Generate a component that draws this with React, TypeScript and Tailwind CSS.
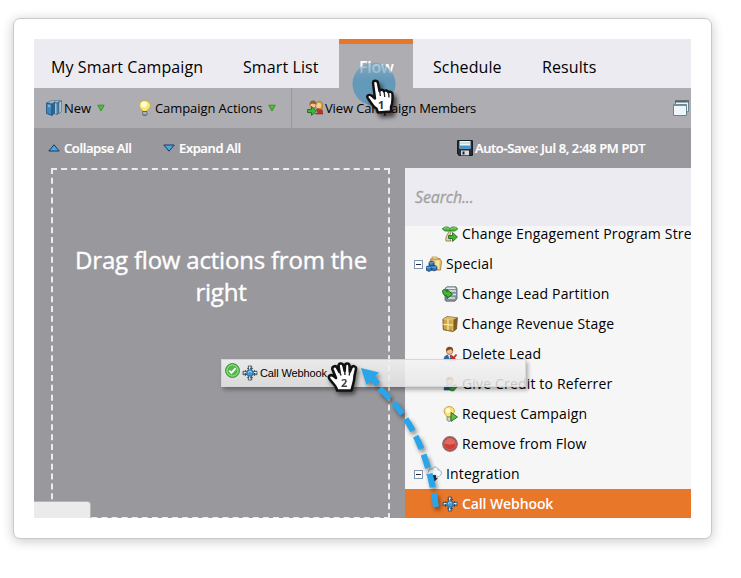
import type { ReactNode } from 'react'

type IconName =
  | 'books' | 'bulb' | 'members' | 'windows' | 'floppy' | 'sprout' | 'folder' | 'partition'
  | 'box' | 'deleteLead' | 'credit' | 'request' | 'remove' | 'cloud' | 'webhook'

interface Tab {
  label: string
  className: string
}

const TABS: Tab[] = [
  { label: 'My Smart Campaign', className: 'w-[189px] pl-[17px] pt-4' },
  { label: 'Smart List', className: 'w-[116px] pl-5 pt-4' },
  { label: 'Flow', className: 'w-[74px] border-t-[5px] border-[#e8772a] bg-[#aeadb2] pl-5 pt-[11px] font-semibold tracking-[-0.3px] text-white' },
  { label: 'Schedule', className: 'w-[109px] pl-5 pt-4' },
  { label: 'Results', className: 'pl-5 pt-4' },
]

interface TreeItem {
  label: string
  icon: IconName
  group?: boolean
  selected?: boolean
}

const TREE: TreeItem[] = [
  { label: 'Change Engagement Program Stream', icon: 'sprout' },
  { label: 'Special', icon: 'folder', group: true },
  { label: 'Change Lead Partition', icon: 'partition' },
  { label: 'Change Revenue Stage', icon: 'box' },
  { label: 'Delete Lead', icon: 'deleteLead' },
  { label: 'Give Credit to Referrer', icon: 'credit' },
  { label: 'Request Campaign', icon: 'request' },
  { label: 'Remove from Flow', icon: 'remove' },
  { label: 'Integration', icon: 'cloud', group: true },
  { label: 'Call Webhook', icon: 'webhook', selected: true },
]

export default function App() {
  return (
    <div className="relative h-[578px] w-[741px] overflow-hidden bg-white pl-[13px] pt-[18px] font-['Open_Sans',sans-serif] text-black">
      <div className="h-[521px] w-[699px] rounded-[7px] border border-[#c9c9c9] bg-white p-5 shadow-[0_2px_12px_rgba(0,0,0,0.22)]">
        <div className="flex h-[479px] w-[657px] flex-col overflow-hidden bg-[#99989d]">
          <nav className="flex h-[49px] shrink-0 bg-[#ecebf2] text-[16px] leading-6 tracking-[0.1px] whitespace-nowrap">
            {TABS.map(tab => <div key={tab.label} className={tab.className}>{tab.label}</div>)}
          </nav>
          <Toolbar />
          <div className="flex h-10 shrink-0 items-center text-[13px] font-semibold tracking-[-0.38px] whitespace-nowrap text-white [-webkit-text-stroke:0.2px_white]">
            <Triangle up className="ml-[14px] mr-1" />
            <span className="w-[99px] pt-0.5">Collapse All</span>
            <Triangle className="mr-1" />
            <span className="w-[278px] pt-0.5">Expand All</span>
            <Icon name="floppy" />
            <span className="ml-0.5 pt-0.5">Auto-Save: Jul 8, 2:48 PM PDT</span>
          </div>
          <div className="flex h-[350px] shrink-0 gap-[15px]">
            <div className="ml-[17px] h-[351px] w-[339px] shrink-0 border-2 border-dashed border-[#ecebf2] pt-[74px] pl-px text-center text-[24px] leading-8 tracking-[-0.2px] text-white [-webkit-text-stroke:0.4px_white]">
              Drag flow actions from the<br />right
            </div>
            <div className="flex w-[286px] shrink-0 flex-col">
              <div className="flex h-[58px] shrink-0 items-center bg-[#ecebf2] pl-[10px] text-[16px] tracking-[-0.15px] text-[#a1a19c] italic [-webkit-text-stroke:0.3px_#a1a19c]">
                Search...
              </div>
              <div className="h-[292px] overflow-hidden bg-[#f6f6f6]">
                <div className="-mt-[7px] text-[14px] tracking-[0.17px]">
                  {TREE.map(item => <TreeRow key={item.label} item={item} />)}
                </div>
              </div>
            </div>
          </div>
        </div>
      </div>

      {/* status tip clipped by the window's lower left corner */}
      <div className="absolute left-[34px] top-[501px] h-[17px] w-[57px] rounded-tr-[4px] border-t border-r border-[#b5b5b7] bg-[#ebebeb]" />
      <DragProxy />
      <DragArrow />
      <PointerHand />
      <GrabHand />
    </div>
  )
}

function Toolbar() {
  return (
    <div className="flex h-10 shrink-0 items-center bg-[#aeadb2] text-[13px] whitespace-nowrap">
      <div className="flex h-full w-[257px] items-center pl-3">
        <Icon name="books" />
        <span className="ml-0.5 w-[33px] pt-px">New</span>
        <GreenCaret />
        <span className="ml-8"><Icon name="bulb" /></span>
        <span className="ml-0.5 w-[113px] pt-px tracking-[-0.08px]">Campaign Actions</span>
        <GreenCaret />
      </div>
      <div className="flex h-full flex-1 items-center border-l border-[#98979b] pl-[15px]">
        <Icon name="members" />
        <span className="ml-0.5 pt-px tracking-[-0.13px]">View Campaign Members</span>
        <span className="mr-[2px] ml-auto"><Icon name="windows" /></span>
      </div>
    </div>
  )
}

function TreeRow({ item }: { item: TreeItem }) {
  return (
    <div className={`flex h-[30px] items-center whitespace-nowrap ${item.group ? 'pl-[9px]' : 'pl-[37px]'} ${item.selected ? 'bg-[#e8772a] font-semibold tracking-[-0.1px] text-white' : ''}`}>
      {item.group && (
        <span className="mr-[3px] flex h-[9px] w-[9px] items-center justify-center border border-[#8095ad] bg-white">
          <span className="h-px w-[5px] bg-[#1c2b3b]" />
        </span>
      )}
      <Icon name={item.icon} />
      <span className="ml-1 pb-0.5">{item.label}</span>
    </div>
  )
}

function GreenCaret() {
  return (
    <svg width="8" height="8" viewBox="0 0 8 8">
      <path d="M.8 1.2h6.4L4 7z" fill="#4fbf34" stroke="#3a8a2e" strokeWidth=".9" strokeLinejoin="round" />
    </svg>
  )
}

function Triangle({ up, className }: { up?: boolean; className: string }) {
  return (
    <svg className={className} width="12" height="8" viewBox="0 0 12 8">
      <path d={up ? 'M6 .8 11.2 7H.8z' : 'M6 7.2 11.2 1H.8z'} fill="#4ba7df" stroke="#143c63" strokeLinejoin="round" />
    </svg>
  )
}

function Person({ shirt = '#2f6ca5' }: { shirt?: string }) {
  return (
    <>
      <path d="M1 14c0-4 2-5 5-5s5 1 5 5z" fill={shirt} stroke="#234566" strokeWidth=".6" />
      <path d="M5 9h3l-1.4 4z" fill="#f2f2f2" />
      <circle cx="6.6" cy="5" r="3.3" fill="#f0bf8c" stroke="#8b5a2c" strokeWidth=".6" />
      <path d="M3.2 5C2.7 1.5 5 .6 7 .7c2.5.1 3.6 2 3 4.3-1-.3-1.4-1.5-2.4-1.8-1.3.8-3 .4-3.3 1.8z" fill="#7b4a22" />
    </>
  )
}

function RightArrow() {
  return <path d="M2 6.5h4V3.5L11 8l-5 4.500V9.500H2z" fill="#43b531" stroke="#17651a" strokeWidth=".8" />
}

const ICONS: Record<IconName, ReactNode> = {
  books: (
    <>
      <path d="M.5 3.200 5 .8h10.500l-2 2z" fill="#c5dcea" stroke="#2f5c80" strokeWidth=".7" />
      <path d="M.5 3.200 6 4.200v11.200L.5 13.500z" fill="#3f86b8" stroke="#1e4e78" strokeWidth=".8" />
      <path d="m6 4.200 3-2.500v11.200l-3 2.500z" fill="#2c6a9c" stroke="#1e4e78" strokeWidth=".6" />
      <path d="m9 2.800 2 .5v11.200l-2-.5z" fill="#dce9f1" stroke="#2f5c80" strokeWidth=".6" />
      <path d="m11 3.300 2-2v11.200l-2 2z" fill="#5592bc" stroke="#1e4e78" strokeWidth=".6" />
      <path d="m13 2.500 2.500-1.700-.3 11-2.200 2z" fill="#b9d2e1" stroke="#2f5c80" strokeWidth=".6" />
      <path d="m2 5 2.500.5M2 6.500 4.500 7" stroke="#9dcbe8" strokeWidth=".8" />
    </>
  ),
  bulb: (
    <>
      <path d="M6 11.5C5.5 9.5 2.200 8.500 2.200 5.500a5.600 5.100 0 0 1 11.200 0c0 3-3.300 4-3.800 6z" fill="#fbe66e" stroke="#c3a144" strokeWidth=".8" />
      <ellipse cx="7" cy="4.500" rx="3" ry="3" fill="#fffbd2" />
      <path d="M5.700 11.500h4.200v3l-1 1.200H6.700l-1-1.200z" fill="#8d9498" stroke="#454b50" strokeWidth=".7" />
      <path d="M5.700 13h4.200" stroke="#e5e5e5" strokeWidth=".7" />
    </>
  ),
  members: (
    <>
      <path d="M8.500 14c0-4 1-5.500 3.500-5.500s3.700 1.500 3.700 5.500z" fill="#c92f25" stroke="#7e2019" strokeWidth=".6" />
      <path d="M9 7.500C7.800-.5 16 .2 15.400 5l-.2 4.200H13z" fill="#e0aa2c" stroke="#94681c" strokeWidth=".6" />
      <circle cx="11.500" cy="5.500" r="2.500" fill="#f6cf9e" />
      <path d="M2 13c0-3.500 1.500-4.500 4-4.500S10 9.500 10 13z" fill="#d9e2ea" stroke="#6b7d8e" strokeWidth=".6" />
      <circle cx="6" cy="5" r="3.100" fill="#f3c491" stroke="#8b5a2c" strokeWidth=".6" />
      <path d="M2.800 5C2.300 1.300 4.500.5 6.300.5c2.300 0 3.300 2 2.900 4-1.700 0-4-1.800-6.400.5z" fill="#8e6234" />
      <g transform="translate(-1.500 3)"><RightArrow /></g>
    </>
  ),
  windows: (
    <>
      <path d="M2.500.7h13v11h-13z" fill="#edf3f6" stroke="#6a8493" />
      <path d="M2 .3h14v2.200H2z" fill="#59656d" />
      <path d="M.5 4.500h13v11H.5z" fill="#eef6fa" stroke="#668494" />
      <path d="M.5 4.500h13v1.500H.5z" fill="#78909c" />
      <path d="M11.500 4.700h1.300v1h-1.300zM13.800 1h1.300v1h-1.300z" fill="#dc5836" />
    </>
  ),
  floppy: (
    <>
      <path d="M.6.6h14.800v14.800H2L.6 14z" fill="#292e36" stroke="#11151b" />
      <path d="M2.500 1h11v7.500h-11z" fill="#e9f7ff" />
      <path d="M2.500 5.500h11v3h-11z" fill="#3e99d8" />
      <path d="M3 3h10" stroke="#abc3cf" />
      <path d="M4 10.500h8v4.800H4z" fill="#d6dade" />
      <path d="M5.500 11.500h2v3h-2z" fill="#20242a" />
    </>
  ),
  sprout: (
    <>
      <path d="M7.500 4c-1 4-4.500 6-3.500 11h5c-2-3-1-7 0-9z" fill="#e7d6ad" stroke="#8a6c3d" strokeWidth=".8" />
      <path d="M8 4.500C6 5.500 1 5.500.5 2.500 3 .3 7 .5 8 2.500c1-2 5.500-2.200 7.500 0C15 5.500 10 5.500 8 4.500z" fill="#4eb937" stroke="#1e7124" strokeWidth=".8" />
      <path d="M2 2.300c2-.8 4-.5 5 .7M14 2.300c-2-.8-4-.5-5 .7" stroke="#a6e48a" strokeWidth=".7" fill="none" />
      <g transform="translate(4.500 3)"><RightArrow /></g>
    </>
  ),
  folder: (
    <>
      <path d="M6 3V1h5l1 1.500h2v3z" fill="#fff0bc" stroke="#a98037" strokeWidth=".7" />
      <path d="M4.500 3h9l2 2-1 9h-9z" fill="#edc569" stroke="#9e722b" strokeWidth=".8" />
      <path d="m9.500 5 4-1-.5 9H9.500z" fill="#f9e3a2" />
      <path d="m3 6 3-1 2 1v3l-3 1-2-1zM0 11l3-1.500L6 11v3l-3 1.500L0 14zM5 10.500 8 9l3 1.500v3L8 15l-3-1.500z" fill="#2f78bc" stroke="#173f70" strokeWidth=".7" />
      <path d="m3.300 6.400 2.300.6L7.700 6M.5 11.200l2.600.8 2.400-.8M5.500 10.700l2.500.8 2.500-.8" stroke="#8bc4ea" strokeWidth=".7" fill="none" />
    </>
  ),
  partition: (
    <>
      <path d="M3 2.500 5 .8h9l1 2v10l-2 2.400H4l-1-1z" fill="#84939a" stroke="#596870" strokeWidth=".8" />
      <path d="M5 1.500h8l1 1.500H4z" fill="#e9efef" />
      <path d="M6 5h8M6 8.500h8M6 12h7" stroke="#dde4e5" strokeWidth="1.300" />
      <path d="M.6 4.500c1-1.500 2.500-1 3.500 0L5 5.700V3.500l5.500 4.700L5 12.500V10C2 10 .6 8 .6 4.500z" fill="#45b72d" stroke="#145d19" strokeWidth=".9" />
    </>
  ),
  box: (
    <>
      <path d="M1 3 5 .7l10.300 1L14.500 13l-3.500 2.500-9.700-1.800z" fill="#cda545" stroke="#6e4b19" strokeWidth=".9" />
      <path d="m1 3 10 1 4.300-2.300L5 .7z" fill="#d9b866" />
      <path d="m11 4 4.300-2.300L14.500 13 11 15.500z" fill="#805c25" />
      <path d="M6 3.500v10.800M1.300 8.300l9.700.9" fill="none" stroke="#fbe9ab" strokeWidth="1.300" />
      <path d="m1 3 10 1v11.400" fill="none" stroke="#f0d488" strokeWidth=".6" />
    </>
  ),
  deleteLead: (
    <>
      <g transform="translate(1 0)"><Person /></g>
      <path d="m8 9.500 6.500 5M14.500 8.500 9 15" stroke="#d02c24" strokeWidth="1.900" />
    </>
  ),
  credit: (
    <>
      <g transform="translate(1 0)"><Person shirt="#1b5c8c" /></g>
      <path d="m6 10 3 1 4-2.500 2.500 2-4 4.500-3-.5z" fill="#34a233" stroke="#14591d" strokeWidth=".7" />
    </>
  ),
  request: (
    <>
      <path d="M5 11C4.500 9 2 8 2 5.200a5.200 4.700 0 0 1 10.400 0C12.400 8 9.500 9 9 11z" fill="#fbe475" stroke="#b99434" strokeWidth=".8" />
      <ellipse cx="6" cy="4.500" rx="2.300" ry="2.500" fill="#fffbd2" />
      <path d="M5 11h4v3l-1 1.200H6L5 14z" fill="#d2d3d1" stroke="#686e72" strokeWidth=".7" />
      <path d="m9 6.500 6.500 4.500L9 15.400z" fill="#5cc13d" stroke="#246b1e" strokeWidth=".9" />
    </>
  ),
  remove: (
    <>
      <circle cx="8" cy="8" r="7.300" fill="#c2322f" stroke="#837878" strokeWidth="1.200" />
      <circle cx="8" cy="8" r="5.800" fill="#cf3d39" stroke="#dc7771" strokeWidth=".6" />
      <path d="M2.700 7.500a5.300 5 0 0 1 10.600 0c-4 1.500-7 1.500-10.600 0z" fill="#df6a62" />
    </>
  ),
  cloud: (
    <>
      <path d="M4 11C.5 11-.3 7 2.700 6 2.500 3 5.200 2.300 6.300 3.300 7-.2 12.300.6 12 4c3.500-.5 4.500 4 2 5.500C13 11 12 11 10 11z" fill="#f5f9fb" stroke="#9aadba" />
      <path d="M7 9h3v3h2l-3.500 3.500L5 12h2z" fill="#263646" />
    </>
  ),
  webhook: (
    <>
      <path d="M6.300 1h3.400v14H6.300zM1 6.300h14v3.400H1z" fill="#8fa9b8" stroke="#33495a" strokeWidth=".8" />
      <path d="M5.300 3.500h5.400M5.300 12.500h5.400M3.500 5.300v5.400M12.500 5.300v5.400" stroke="#33495a" strokeWidth="1" />
      <path d="M7.600 1.500v3M2 7.500h2.500M12 7.500h2.500M7.600 11.500V14.500" stroke="#e3edf2" strokeWidth="1.100" />
      <circle cx="8" cy="8" r="3.200" fill="#3c9ad8" stroke="#28618c" strokeWidth=".8" />
      <path d="m6 7.700 1.800-1.700 1.900 1.200" stroke="#b7e2f8" fill="none" />
    </>
  ),
}

function Icon({ name }: { name: IconName }) {
  return <svg className="block shrink-0" width="16" height="16" viewBox="0 0 16 16">{ICONS[name]}</svg>
}

function DragProxy() {
  return (
    <div className="absolute left-[221px] top-[359px] flex h-[28px] w-[305px] items-center border border-[#d2d2d2]/80 bg-linear-to-b from-[#f3f3f3]/90 to-[#e6e6e6]/85 pl-[3px] font-['Liberation_Sans',sans-serif] text-[11px] tracking-[-0.12px] shadow-[2px_3px_4px_rgba(0,0,0,0.3)]">
      <svg className="-mt-[6px]" width="15" height="15" viewBox="0 0 15 15">
        <circle cx="7.5" cy="7.5" r="6.9" fill="#52b947" stroke="#2f8f31" />
        <circle cx="7.5" cy="7.5" r="5.6" fill="none" stroke="#b9e5ac" strokeWidth=".9" />
        <path d="m4.300 7.700 2.200 2.200 4.200-4.700" fill="none" stroke="#fff" strokeWidth="1.9" />
      </svg>
      <span className="ml-0.5"><Icon name="webhook" /></span>
      <span className="ml-0.5">Call Webhook</span>
    </div>
  )
}

function DragArrow() {
  return (
    <svg className="absolute left-[350px] top-[355px] drop-shadow-[2px_3px_2px_rgba(0,0,0,0.45)]" width="110" height="163" viewBox="350 355 110 163">
      <path d="M436 507C430 462 415 420 379 388" fill="none" stroke="#2aa5ea" strokeWidth="6" strokeDasharray="14 6" />
      <path d="m361 368 18 4.500-4 4 5 5.500-4.500 4.500-5-5.500-4 4z" fill="#2aa5ea" />
    </svg>
  )
}

function PointerHand() {
  return (
    <svg className="absolute left-[345px] top-[55px]" width="60" height="70" viewBox="345 55 60 70">
      <defs>
        <linearGradient id="halo" x2="0" y2="1">
          <stop offset="0" stopColor="#5c9cc0" stopOpacity=".45" />
          <stop offset=".4" stopColor="#4a92bb" stopOpacity=".75" />
          <stop offset="1" stopColor="#4a92bb" stopOpacity=".7" />
        </linearGradient>
      </defs>
      <circle cx="374" cy="84" r="21.5" fill="url(#halo)" />
      <g className="drop-shadow-[3px_4px_2px_rgba(0,0,0,0.6)]">
        <path
          d="M373 83c0-3 4.500-3 5 0l1.500 8c1-2 4-1.500 4.500.5 1-2 4-1 4.500 1 1.500-1.500 4-.5 4 2 0 6 .3 9-1.500 12v5l-13 1-1.500-4c-4-2-6-7-8.500-10-2-3 1-4.500 3.500-3l3.500 3z"
          fill="#fff" stroke="#111" strokeWidth="2.4" strokeLinejoin="round"
        />
        <path d="m379.700 91 .7 5M384.200 92l.5 5M388.700 93.500l.3 4" stroke="#222" strokeWidth="1.300" />
      </g>
      <text x="378" y="109" className="fill-[#333] font-['Open_Sans',sans-serif] text-[11px] font-bold">1</text>
    </svg>
  )
}

function GrabHand() {
  return (
    <svg className="absolute left-[323px] top-[355px] drop-shadow-[2px_3px_2px_rgba(0,0,0,0.5)]" width="45" height="50" viewBox="323 355 45 50">
      <path
        d="M337 390.500c0-4-3.500-6-7.500-11.500-2-3 1-5 4-3l2.500 2-3.500-8.500c-1-3 3-4.500 4.500-2l2.500 4.500-1-6c0-3 4-3.500 5-.5l1.200 5.500.3-5.500c.3-3 4.300-2.500 4.500.3l.3 6 1.700-4.300c1.500-2.500 5-1 4.500 1.500l-1.500 7c0 6-1.500 8-3 14.500z"
        fill="#fff" stroke="#111" strokeWidth="2.600" strokeLinejoin="round"
      />
      <path d="m339.500 371 1.500 4.500M344.700 370.500l.3 4.500M349.700 371l-.4 4.500" stroke="#222" strokeWidth="1.400" />
      <text x="341" y="387" className="fill-[#444] font-['Open_Sans',sans-serif] text-[11px] font-bold">2</text>
    </svg>
  )
}
